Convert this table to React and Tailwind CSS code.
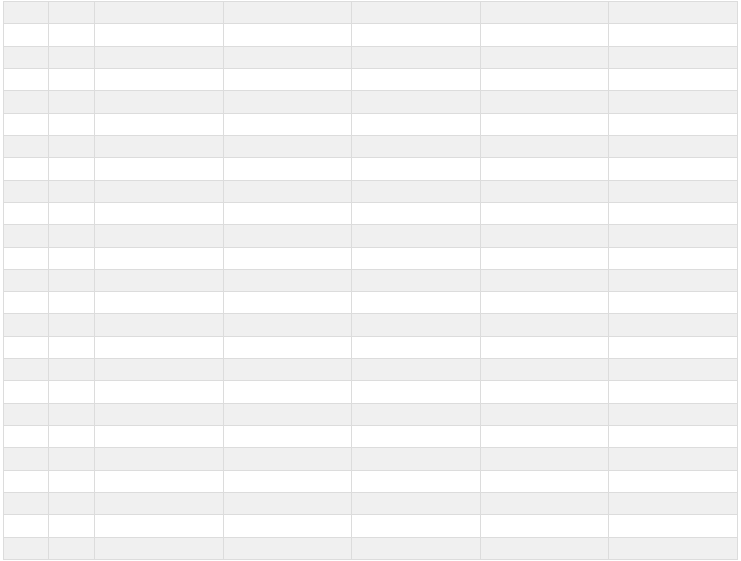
export default function App() {
  const rows = Array.from({ length: 25 }, (_, i) => i);
  const cols = Array.from({ length: 7 }, (_, i) => i);
  return (
    <div className="w-[741px] h-[561px] bg-white pl-[3px] pt-[1px]">
      <div className="grid w-[735px] h-[559px] grid-cols-[45px_46px_1fr_1fr_1fr_1fr_1fr] grid-rows-[repeat(25,1fr)] border-l border-t border-[#dcdcdc]">
        {rows.map((r) =>
          cols.map((c) => (
            <div
              key={`${r}-${c}`}
              className={`border-r border-b border-[#dcdcdc] ${r % 2 === 0 ? "bg-[#f0f0f0]" : "bg-white"}`}
            />
          ))
        )}
      </div>
    </div>
  );
}
